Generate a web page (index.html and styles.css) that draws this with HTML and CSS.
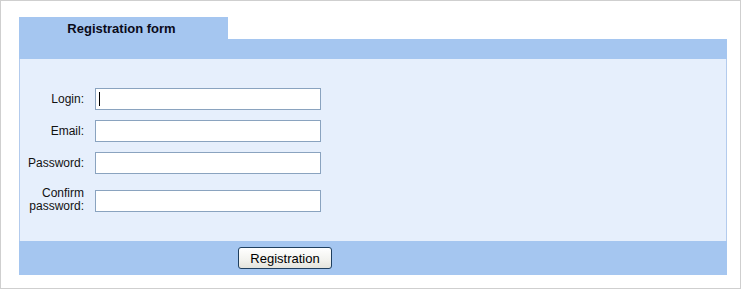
FILE: index.html
```html
<!DOCTYPE html>
<html>
<head>
<meta charset="utf-8">
<link rel="stylesheet" href="styles.css">
</head>
<body>
<div class="frame">
  <div class="panel">
    <div class="tab-row">
      <div class="tab">Registration form</div>
    </div>
    <div class="top-bar"></div>
    <div class="body">
      <div class="form">
        <label class="lbl" for="login">Login:</label>
        <span class="caret-wrap"><input class="field" id="login" type="text"></span>
        <label class="lbl" for="email">Email:</label>
        <input class="field" id="email" type="text">
        <label class="lbl" for="pw">Password:</label>
        <input class="field" id="pw" type="password">
        <label class="lbl lbl-two" for="pw2">Confirm<br>password:</label>
        <input class="field field-two" id="pw2" type="password">
      </div>
    </div>
    <div class="bottom-bar">
      <button class="btn" type="button">Registration</button>
    </div>
  </div>
</div>
</body>
</html>
```

FILE: styles.css
```css
html, body {
  margin: 0;
  padding: 0;
  background: #ffffff;
}
body {
  font-family: "Liberation Sans", Arial, sans-serif;
  font-size: 12px;
  color: #000;
}
.frame {
  box-sizing: border-box;
  width: 741px;
  height: 289px;
  border: 1px solid #cfcfcf;
  padding: 16px 0 0 18px;
}
.panel {
  width: 708px;
}
.tab-row {
  display: flex;
}
.tab {
  width: 209px;
  height: 22px;
  background: #a5c6f0;
  font-weight: bold;
  font-size: 13px;
  color: #0a0a1a;
  display: flex;
  align-items: center;
  justify-content: center;
  padding-right: 4px;
  box-sizing: border-box;
}
.top-bar {
  height: 20px;
  background: #a5c6f0;
}
.body {
  box-sizing: border-box;
  height: 182px;
  background: #e6effc;
  border-left: 1px solid #b3cbed;
  border-right: 1px solid #b3cbed;
  padding-top: 29px;
}
.form {
  display: grid;
  grid-template-columns: 64px 226px;
  column-gap: 11px;
  row-gap: 10px;
  align-items: center;
}
.lbl {
  text-align: right;
  color: #111;
  font-size: 12px;
}
.lbl-two {
  line-height: 13px;
  align-self: start;
  margin-top: 3px;
}
.caret-wrap {
  position: relative;
  display: block;
  width: 226px;
  height: 22px;
}
.caret-wrap::after {
  content: "";
  position: absolute;
  left: 4px;
  top: 4px;
  width: 1px;
  height: 14px;
  background: #000;
}
.field {
  display: block;
  box-sizing: border-box;
  width: 226px;
  height: 22px;
  margin: 0;
  border: 1px solid #8aa3bf;
  background: #ffffff;
  padding: 1px 3px;
  font-family: "Liberation Sans", Arial, sans-serif;
  font-size: 12px;
  outline: none;
}
.field.field-two {
  align-self: start;
  margin-top: 6px;
}
.bottom-bar {
  height: 34px;
  background: #a5c6f0;
  display: flex;
  align-items: center;
  padding-left: 219px;
  box-sizing: border-box;
}
.btn {
  box-sizing: border-box;
  width: 94px;
  height: 22px;
  margin: 0;
  padding: 0;
  border: 1px solid #1f3f5f;
  border-radius: 3px;
  background: linear-gradient(#ffffff, #f2f2ee 60%, #e4e3dc);
  font-family: "Liberation Sans", Arial, sans-serif;
  font-size: 13px;
  color: #000;
}
```
